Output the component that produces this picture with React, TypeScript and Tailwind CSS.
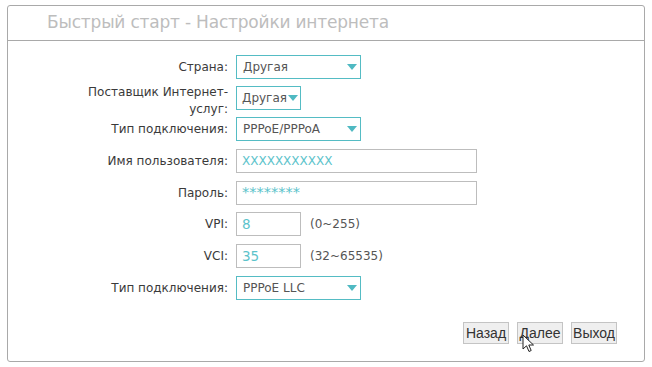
import React from "react";

const font = { fontFamily: '"DejaVu Sans", Verdana, sans-serif' };

function Arrow() {
  return (
    <svg width="10" height="6" viewBox="0 0 10 6" className="shrink-0">
      <path d="M0 0 L10 0 L5 6 Z" fill="#4fb9c2" />
    </svg>
  );
}

function Select({ value, wide = true }: { value: string; wide?: boolean }) {
  return (
    <div
      className={`flex h-[24px] items-center border border-[#55bcc4] text-[12px] text-[#555] ${
        wide ? "w-[125px] justify-between pl-[6px] pr-[3px]" : "w-[65px] gap-[1px] pl-[5px]"
      }`}
    >
      <span>{value}</span>
      <Arrow />
    </div>
  );
}

function Field({ value, w, size }: { value: string; w: string; size: string }) {
  return (
    <div className={`flex h-[24px] items-center border border-[#bdbdbd] pl-[5px] text-[#5cc3cb] ${w} ${size}`}>
      {value}
    </div>
  );
}

function Row({
  label,
  mt,
  children,
}: {
  label: React.ReactNode;
  mt: string;
  children: React.ReactNode;
}) {
  return (
    <div className={`flex h-[24px] items-center gap-[8px] ${mt}`}>
      <div className="w-[220px] text-right text-[12px] text-[#3a3a3a]">{label}</div>
      {children}
    </div>
  );
}

function Cursor() {
  return (
    <svg width="14" height="20" viewBox="0 0 14 20" className="pointer-events-none absolute left-[4px] top-[11px]">
      <path
        d="M1 1 L1 15 L4.5 11.8 L7 17.5 L9.2 16.5 L6.8 11 L11.5 11 Z"
        fill="#fff"
        stroke="#222"
        strokeWidth="1"
        strokeLinejoin="round"
      />
    </svg>
  );
}

function Btn({ children, cursor = false }: { children: React.ReactNode; cursor?: boolean }) {
  return (
    <div
      className="relative flex h-[22px] w-[46px] items-center justify-center border border-[#c4c4c4] bg-[#efefef] text-[14px] text-[#333]"
      style={{ fontFamily: '"Liberation Sans", Arial, sans-serif' }}
    >
      {children}
      {cursor && <Cursor />}
    </div>
  );
}

export default function App() {
  return (
    <div className="h-[367px] w-[652px] bg-white pl-[7px] pt-[5px]" style={font}>
      <div className="flex h-[357px] w-[638px] flex-col rounded-[3px] border border-[#a9a9a9]">
        <div className="flex h-[35px] items-center border-b border-[#a9a9a9] pl-[39px] text-[17px] tracking-[-0.2px] text-[#bdbdbd]">
          Быстрый старт - Настройки интернета
        </div>
        <div className="flex flex-col pt-[14px]">
          <Row label="Страна:" mt="mt-0">
            <Select value="Другая" />
          </Row>
          <div className="mt-[5px] flex h-[34px] items-start gap-[8px]">
            <div className="w-[220px] text-right text-[12px] leading-[17px] text-[#3a3a3a]">
              Поставщик Интернет-
              <br />
              услуг:
            </div>
            <div className="mt-[2px]">
              <Select value="Другая" wide={false} />
            </div>
          </div>
          <Row label="Тип подключения:" mt="-mt-[1px]">
            <Select value="PPPoE/PPPoA" />
          </Row>
          <Row label="Имя пользователя:" mt="mt-[8px]">
            <Field value="XXXXXXXXXXX" w="w-[241px]" size="text-[12px]" />
          </Row>
          <Row label="Пароль:" mt="mt-[8px]">
            <Field value="********" w="w-[241px]" size="text-[14.5px]" />
          </Row>
          <Row label="VPI:" mt="mt-[7px]">
            <Field value="8" w="w-[65px]" size="text-[13.5px]" />
            <span className="ml-[1px] text-[12px] text-[#555]">(0~255)</span>
          </Row>
          <Row label="VCI:" mt="mt-[8px]">
            <Field value="35" w="w-[65px]" size="text-[13.5px]" />
            <span className="ml-[1px] text-[12px] text-[#555]">(32~65535)</span>
          </Row>
          <Row label="Тип подключения:" mt="mt-[8px]">
            <Select value="PPPoE LLC" />
          </Row>
          <div className="mt-[22px] flex justify-end gap-[8px] pr-[27px]">
            <Btn>Назад</Btn>
            <Btn cursor>Далее</Btn>
            <Btn>Выход</Btn>
          </div>
        </div>
      </div>
    </div>
  );
}
